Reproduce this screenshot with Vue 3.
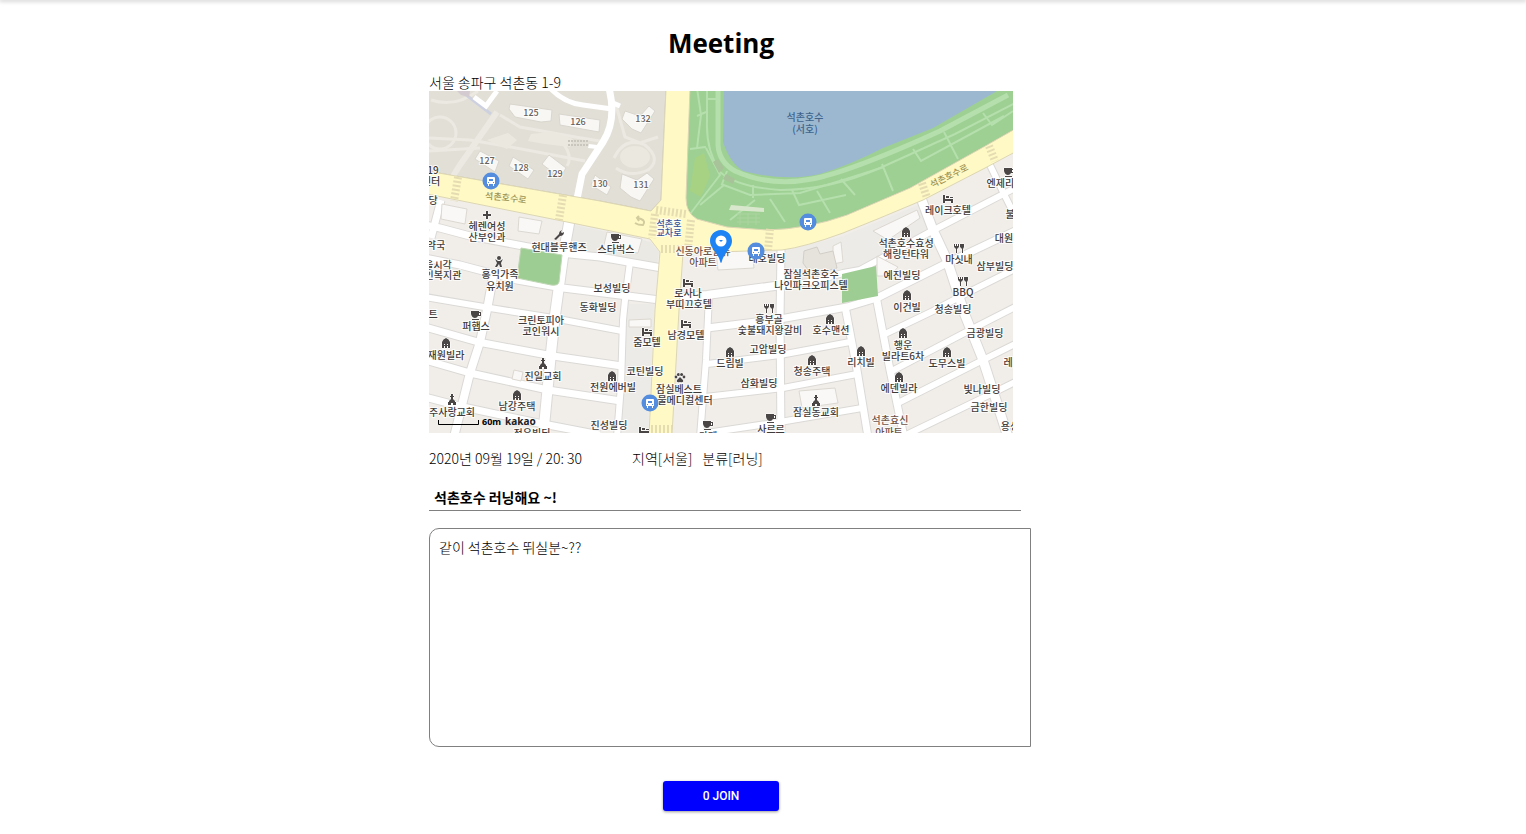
<script setup>
import { ref } from 'vue'

const title = ref('석촌호수 러닝해요 ~!')
const content = ref('같이 석촌호수 뛰실분~??')
const joined = ref(0)

const streets = [
  { w: 7, d: 'M441 200L431 238' },
  { w: 7, d: 'M425 225L440 228L470 236L560 253L600 257L662 268' },
  { w: 7, d: 'M425 258L460 265L517 280L563 288L660 300' },
  { w: 10, d: 'M570 218L563 257L555 315L551 353L543 437' },
  { w: 8, d: 'M493 277L487 310L480 342L470 373L454 437' },
  { w: 6, d: 'M425 297L490 308L553 318L622 331' },
  { w: 7, d: 'M425 327L478 342L553 356L622 366' },
  { w: 7, d: 'M425 360L470 373L548 390L621 401' },
  { w: 7, d: 'M425 397L463 407L543 424L600 435' },
  { w: 6, d: 'M630 262L625 300L623 320L621 385L617 437' },
  { w: 8, d: 'M676 298L707 295L782 285' },
  { w: 6, d: 'M709 295L706 360L700 437' },
  { w: 7, d: 'M781 250L780 320L781 437' },
  { w: 6, d: 'M782 286L815 281L843 273L860 270L930 232L1017 187' },
  { w: 7, d: 'M707 328L780 319L847 307L877 298L943 265L1017 230' },
  { w: 6, d: 'M707 364L780 355L850 342' },
  { w: 6, d: 'M705 397L783 388L857 374' },
  { w: 6, d: 'M700 434L780 422L862 408' },
  { w: 6, d: 'M883 335L933 311L967 293L1017 268' },
  { w: 6, d: 'M890 372L970 330L1017 306' },
  { w: 6, d: 'M898 403L983 360L1017 343' },
  { w: 6, d: 'M906 435L993 393L1017 381' },
  { w: 9, d: 'M921 198L933 230L947 260L965 315L983 360L1008 437' },
  { w: 7, d: 'M876 296L890 370L904 437' },
  { w: 7, d: 'M845 306L857 370L868 437' },
  { w: 6, d: 'M989 163L1003 192L1015 216' }
]

const buildings = [
  '510,104 552,110 551,121 541,122 515,117 509,109',
  '559,114 600,120 599,132 560,125',
  '480,151 499,161 495,172 475,159',
  '513,157 534,170 528,179 509,166',
  '549,155 566,168 560,178 542,164',
  '595,175 611,187 607,195 591,185',
  '625,111 640,116 649,106 655,111 641,133 632,129 622,119',
  '622,174 637,180 647,173 654,179 640,201 631,197 620,188'
]

const houses = [
  '442,204 467,209 465,224 441,219',
  '519,217 542,221 539,234 518,231',
  '607,232 642,239 638,253 603,249',
  '873,231 917,210 920,218 888,240',
  '833,246 841,242 843,262 833,264',
  '716,252 752,250 754,268 718,270',
  '629,320 651,319 651,327 629,327',
  '799,391 835,388 838,403 802,408',
  '514,370 523,372 521,381 512,379',
  '877,256 898,267 890,276 877,276'
]

const labels = [
  [531, 116, '125', 'num'], [578, 125, '126', 'num'], [643, 122, '132', 'num'],
  [487, 164, '127', 'num'], [521, 171, '128', 'num'], [555, 177, '129', 'num'],
  [600, 187, '130', 'num'], [641, 188, '131', 'num'],
  [433, 174, '19'], [431, 185, '센터'], [433, 204, '당'],
  [487, 230, '헤렌여성'], [487, 241, '산부인과'], [436, 249, '약국'],
  [559, 251, '현대블루핸즈'], [616, 253, '스타벅스'],
  [438, 269, '을시각'], [443, 279, '인복지관'],
  [500, 278, '홍익가족'], [500, 290, '유치원'],
  [612, 292, '보성빌딩'], [598, 311, '동화빌딩'],
  [433, 318, '트'], [476, 330, '퍼햅스'], [541, 324, '크린토피아'], [541, 335, '코인워시'],
  [446, 359, '재원빌라'], [543, 380, '진일교회'], [613, 391, '전원에버빌'],
  [452, 416, '주사랑교회'], [517, 410, '남강주택'], [532, 437, '정우빌딩'],
  [609, 429, '진성빌딩'], [645, 375, '코틴빌딩'], [647, 346, '줌모텔'], [686, 339, '남경모텔'],
  [688, 297, '로사나'], [689, 308, '부띠끄호텔'],
  [669, 227, '석촌호', 'blue'], [669, 236, '교차로', 'blue'],
  [703, 255, '신동아로얄듀', 'brown'], [703, 266, '아파트', 'brown'], [767, 262, '태호빌딩'],
  [811, 278, '잠실석촌호수'], [811, 289, '나인파크오피스텔'],
  [769, 323, '흥부골'], [770, 334, '숯불돼지왕갈비'], [831, 334, '호수맨션'],
  [768, 353, '고암빌딩'], [730, 367, '드림빌'], [759, 387, '삼화빌딩'],
  [679, 393, '잠실베스트'], [685, 404, '물메디컬센터'], [771, 433, '사르르'], [708, 440, '카페'],
  [812, 375, '청송주택'], [816, 416, '잠실동교회'], [861, 366, '리치빌'],
  [906, 247, '석촌호수효성'], [906, 258, '해링턴타워'], [902, 279, '예진빌딩'], [907, 311, '이건빌'],
  [948, 214, '레이크호텔'], [1005, 187, '엔제리너'], [1010, 218, '불'], [1004, 242, '대원'],
  [959, 263, '마싯내'], [995, 270, '삼부빌딩'], [963, 296, 'BBQ'], [953, 313, '청송빌딩'],
  [903, 349, '행운'], [903, 360, '빌라트6차'], [947, 367, '도무스빌'], [985, 337, '금광빌딩'],
  [1008, 366, '레'], [899, 392, '에덴빌라'], [982, 393, '빛나빌딩'], [989, 411, '금한빌딩'],
  [1010, 430, '용성'], [890, 424, '석촌효신', 'brown'], [889, 436, '아파트', 'brown'],
  [805, 121, '석촌호수', 'lake'], [805, 133, '(서호)', 'lake']
]

const icons = [
  ['house', 446, 343], ['house', 612, 376], ['house', 517, 395], ['house', 730, 352],
  ['house', 830, 319], ['house', 812, 360], ['house', 861, 351], ['house', 906, 232],
  ['house', 907, 295], ['house', 903, 333], ['house', 947, 352], ['house', 899, 377],
  ['cup', 616, 238], ['cup', 476, 315], ['cup', 771, 418], ['cup', 708, 425], ['cup', 1009, 172],
  ['hotel', 688, 283], ['hotel', 647, 332], ['hotel', 686, 324], ['hotel', 948, 199],
  ['church', 543, 364], ['church', 452, 400], ['church', 816, 401],
  ['fork', 769, 308], ['fork', 959, 248], ['fork', 963, 281],
  ['plus', 487, 215], ['wrench', 559, 235], ['child', 499, 262], ['paw', 680, 378], ['hotel', 644, 431]
]

const stops = [[491, 181], [808, 222], [756, 251], [650, 403]]

const crossings = [
  'M458 177L454 201', 'M563 195L559 220', 'M655 214L652 238', 'M656 210L686 214',
  'M661 249L684 249', 'M691 220L688 249', 'M770 229L768 250', 'M922 183L927 198',
  'M989 146L995 161', 'M651 429L672 429'
]
</script>

<template>
  <header class="topbar"></header>
  <main class="meeting">
    <h1>Meeting</h1>
    <p class="address">서울 송파구 석촌동 1-9</p>

    <svg class="map" viewBox="429 91 584 342" role="img" aria-label="지도">
      <defs>
        <g id="i-house"><path d="M-4 5V-1Q-3 -4 0 -5Q3 -4 4 -1V5H2V0H1V5H-1V0H-2V5Z" /><path d="M-2 0H2V1H-2ZM-2 2H2V3H-2Z" stroke="none" /></g>
        <g id="i-cup"><path d="M-5 -4H3V-3H5V1H2Q1 3 -1 3Q-4 3 -5 -1ZM3 -2V0H4V-2ZM-4 4H3V5H-4Z" fill-rule="evenodd" /></g>
        <g id="i-hotel"><path d="M-5 -4H-3V0H5V4H3V2H-3V4H-5ZM-2 -3H1V-1H-2ZM2 -2H5V-1H2Z" /></g>
        <g id="i-church"><path d="M-1 -6H1V-4H2V-3H1V-1L3 1V2H4V5H1V3H-1V5H-4V2H-3V1L-1 -1V-3H-2V-4H-1Z" /></g>
        <g id="i-fork"><path d="M-5 -4H-4V-2H-3V-4H-2V-2H-1V-4H0V-1L-2 1V5H-3V1L-5 -1ZM1 -4H5V-1L4 1V5H3V1L1 -1Z" /></g>
        <g id="i-plus"><path d="M-1 -4H1V-1H4V1H1V4H-1V1H-4V-1H-1Z" /></g>
        <g id="i-wrench"><path d="M-5 4L0 -1Q0 -4 3 -5L2 -3L3 -2L5 -3Q5 1 1 1L-3 5Z" /></g>
        <g id="i-child"><circle cx="0" cy="-4" r="2" /><path d="M-4 -3L-1 -1H1L4 -3L2 1L3 5H1L0 2L-2 5H-4L-2 1Z" /></g>
        <g id="i-paw">
          <circle cx="-4" cy="-1" r="1.4" /><circle cx="-1.6" cy="-3.4" r="1.5" />
          <circle cx="1.6" cy="-3.4" r="1.5" /><circle cx="4" cy="-1" r="1.4" />
          <path d="M0 -1L3 2Q4 5 0 4Q-4 5 -3 2Z" />
        </g>
        <path id="road-west" d="M485 199Q508 200 540 206" />
        <path id="road-east" d="M932 188L980 164" />
      </defs>

      <rect x="429" y="91" width="584" height="342" fill="#f1eeea" />

      <!-- city blocks and side streets -->
      <path d="M570 224L622 235L651 242L659 252L657 266L563 251Z" fill="#ebe9e4" />
      <path d="M785 251L843 236L923 203L931 228L860 266L843 270L785 281Z" fill="#edebe7" />
      <path d="M626 304L655 304L648 433H620Z" fill="#ecebe7" />
      <g class="casing"><path v-for="s in streets" :key="s.d" :d="s.d" :stroke-width="s.w + 2" /></g>
      <g class="street"><path v-for="s in streets" :key="s.d" :d="s.d" :stroke-width="s.w" /></g>
      <g fill="#f9f8f6" stroke="#dcd8d1"><polygon v-for="h in houses" :key="h" :points="h" /></g>
      <path d="M804 251L817 247L820 254L833 251L837 268L822 272L808 270L803 263Z" fill="#e6e3dd" stroke="#d2cec7" />

      <!-- apartment complex -->
      <path d="M427 89H666L661 200L651 211L600 201L427 171Z" fill="#e2dfd7" stroke="#c9c5bb" />
      <g fill="none" stroke="#ebe9e1" stroke-width="3">
        <path d="M497 112L460 165L453 176" stroke-width="6" />
        <path d="M429 138L470 140L505 146L585 161M429 151L480 148M500 115L520 127L575 137L600 141" />
        <circle cx="440" cy="133" r="16" />
        <path d="M478 91Q455 108 431 100M560 140Q574 155 567 166M616 105L625 137L640 143L658 137M614 158Q625 136 645 145Q662 159 648 170Q630 178 616 168" />
      </g>
      <path d="M487 140L508 133L517 140L507 149ZM531 134L552 132L573 139L570 147L545 144L528 141Z" fill="#ebe9df" />
      <ellipse cx="635" cy="157" rx="15" ry="11" fill="#ebe8df" />
      <path d="M461 91L491 114" stroke="#cdd0df" stroke-width="3" />
      <path d="M457 91H470L469 97L461 95Z" fill="#d3cbd0" />
      <g fill="none" stroke="#fff">
        <path d="M609 88Q617 120 603 142L582 174L577 199" stroke-width="7" />
        <path d="M550 88Q564 103 583 105L612 109M613 103L620 106M474 97L486 106L497 91" stroke-width="5" />
      </g>
      <path d="M568 141H588M568 145H590" stroke="#c9c6bd" stroke-width="2" stroke-dasharray="2 1" />
      <path d="M589 144L597 145V149L588 148Z" fill="#fff" />
      <g fill="#f8f7f4" stroke="#d9d6ce"><polygon v-for="b in buildings" :key="b" :points="b" /></g>

      <!-- lakeside park -->
      <path d="M690 89H1015V129L987 145L910 188L847 215Q808 230 767 231L727 228L693 218L685 202Z" fill="#9dd092" stroke="#8fbd7f" />
      <path d="M695 158L704 153L710 176L701 197L690 191Z" fill="#a7d283" />
      <g class="park-path">
        <path d="M707 88V122Q706 150 720 172Q737 187 780 190Q830 190 880 168L955 134L1017 102" stroke-width="2" />
        <path d="M718 88V145Q719 162 735 171Q770 187 812 179Q850 172 940 131L1008 95" stroke-width="5" />
        <path d="M697 88L701 115L697 148L706 147M690 149L705 147M707 99H719M697 116L706 112M706 148L720 175L690 214M721 184L750 195L800 193L843 180L884 167M727 171L722 184M753 185V198M792 190L799 205L846 195M817 191L830 213M841 179L855 195M882 164L893 191M913 149L921 161L1004 116M944 132L958 159M983 113L992 125L1013 111M700 205L724 185M755 200L730 220M770 199L785 222" stroke-width="2" />
      </g>
      <path d="M713 162L718 159L724 168L719 173ZM726 174L735 179L733 184L723 179Z" fill="#a8c299" />
      <path d="M731 205L764 208V212L729 210Z" fill="#d9e8cc" />
      <path d="M737 214H760M737 218H760M737 222H760M740 213V225M748 213V225M756 213V225" stroke="#abd49f" />
      <path d="M724 91H997L933 128L883 148Q850 165 820 174Q785 182 743 171Q730 163 723 142Z" fill="#9cb8d1" />

      <path d="M521 248L562 255L559 282Q558 286 551 285L517 278Z" fill="#9dcd93" stroke="#bfd6b4" />
      <path d="M842 274L876 266L878 296L842 303Z" fill="#9dcd93" />

      <!-- main roads -->
      <path class="avenue" d="M427 171L600 201L651 211L661 200L666 89H690L686 198Q686 213 697 219L727 227L767 230Q808 229 847 215L910 188L987 145L1015 129V152L987 167L923 200L880 218L843 233Q805 247 782 250L683 253L679 310L672 435H649L655 310L660 252L650 239L567 222L427 194Z" />
      <g class="crossing"><path v-for="c in crossings" :key="c" :d="c" /></g>
      <path d="M635 223Q638 225 643 225Q646 221 641 219L638 218M639 216L637 218L639 221" fill="none" stroke="#d2cb9e" stroke-width="2" />

      <g class="poi"><use v-for="(i, n) in icons" :key="n" :href="'#i-' + i[0]" :x="i[1]" :y="i[2]" /></g>
      <g class="labels">
        <text v-for="(l, n) in labels" :key="n" :x="l[0]" :y="l[1]" :class="l[3]">{{ l[2] }}</text>
      </g>
      <text class="road-name"><textPath href="#road-west">석촌호수로</textPath></text>
      <text class="road-name"><textPath href="#road-east">석촌호수로</textPath></text>

      <g v-for="s in stops" :key="s[0]" :transform="`translate(${s[0]} ${s[1]})`">
        <circle r="8.5" fill="#548ddd" />
        <path d="M-3 -4H3Q4 -4 4 -3V3H3V5H2V3H-2V5H-3V3H-4V-3Q-4 -4 -3 -4ZM-2 -2V0H2V-2ZM-3 1V2H-2V1ZM2 1V2H3V1Z" fill="#fff" fill-rule="evenodd" />
      </g>

      <path d="M721 230C714.500 230 710 235 710 241C710 248 718 253 720 261Q721 265 722 261C724 253 732 248 732 241C732 235 727.500 230 721 230Z" fill="#1d83f4" />
      <circle cx="721" cy="241" r="5.500" fill="#fff" />
      <path d="M719 240H723L721 242Z" fill="#1d83f4" />

      <path d="M438.500 420V424.500H478.500V420" fill="none" stroke="#000" />
      <text class="scale" x="482" y="425">60m</text>
      <text class="brand" x="505" y="425">kakao</text>
    </svg>

    <div class="info">
      <time datetime="2020-09-19T20:30">2020년 09월 19일 / 20: 30</time>
      <span class="region">지역[서울]</span>
      <span>분류[러닝]</span>
    </div>

    <input v-model="title" class="title" type="text" aria-label="제목" />
    <textarea v-model="content" class="content" aria-label="내용"></textarea>
    <button class="join" type="button">{{ joined }} JOIN</button>
  </main>
</template>

<style>
body {
  margin: 0;
  background: #fff;
}
</style>

<style scoped>
.topbar {
  height: 0;
  box-shadow: 0 0 4px 1px rgba(0, 0, 0, 0.3);
}
.meeting {
  display: flex;
  flex-direction: column;
  max-width: 584px;
  margin: 0 auto;
  padding: 23px 84px 24px 0;
  color: #000;
  font: 300 14px/18px "Noto Sans CJK KR", sans-serif;
}
h1 {
  margin: 0 0 11px;
  font: 700 26px/40px "Open Sans", "Noto Sans", sans-serif;
  text-align: center;
}
.address {
  margin: 0;
  line-height: 17px;
}
.map {
  display: block;
  width: 100%;
  height: auto;
}
.info {
  display: flex;
  margin-top: 16px;
}
.region {
  margin: 0 10px 0 50px;
}
.title {
  box-sizing: border-box;
  width: calc(100% + 8px);
  height: 27px;
  margin-top: 17px;
  padding: 0 5px;
  border: 0;
  border-bottom: 1px solid gray;
  background: none;
  color: inherit;
  font: inherit;
  font-weight: 700;
}
.content {
  box-sizing: border-box;
  width: calc(100% + 18px);
  height: 219px;
  margin: 17px 0 0;
  padding: 9px;
  border: 1px solid gray;
  border-radius: 10px 0 0 10px;
  background: none;
  color: inherit;
  font: inherit;
  resize: none;
}
.join {
  align-self: center;
  width: 116px;
  height: 30px;
  margin-top: 34px;
  padding: 0;
  border: 0;
  border-radius: 3px;
  background: #00f;
  box-shadow: 0 1px 3px rgba(0, 0, 0, 0.4);
  color: #fff;
  font: 500 12px/30px Roboto, sans-serif;
}
.casing path,
.street path {
  fill: none;
  stroke-linejoin: round;
}
.casing {
  stroke: #dbd9d6;
}
.street {
  stroke: #fff;
}
.park-path {
  fill: none;
  stroke: #b5dfac;
}
.avenue {
  fill: #fef9c5;
  stroke: #ddd6b4;
}
.crossing {
  fill: none;
  stroke: #e5dcb2;
  stroke-width: 8px;
  stroke-dasharray: 2 2;
}
.poi {
  fill: #4a4646;
  stroke: #fff;
  stroke-width: 1px;
  paint-order: stroke;
}
.labels text {
  fill: #3f3b3b;
  stroke: #fff;
  stroke-width: 2px;
  stroke-opacity: 0.8;
  paint-order: stroke;
  font: 500 10px "Noto Sans CJK KR", sans-serif;
  text-anchor: middle;
}
.labels .num {
  fill: #66625e;
  font-size: 9px;
}
.labels .blue {
  fill: #33539a;
  font-size: 9px;
}
.labels .brown {
  fill: #6e5348;
}
.labels .lake {
  fill: #40648c;
  stroke: none;
}
.road-name {
  fill: #9b9152;
  font: 500 9px "Noto Sans CJK KR", sans-serif;
}
.scale {
  font: 700 9px "Noto Sans", sans-serif;
}
.brand {
  fill: #222;
  font: 700 10px "Noto Sans", sans-serif;
}
</style>
